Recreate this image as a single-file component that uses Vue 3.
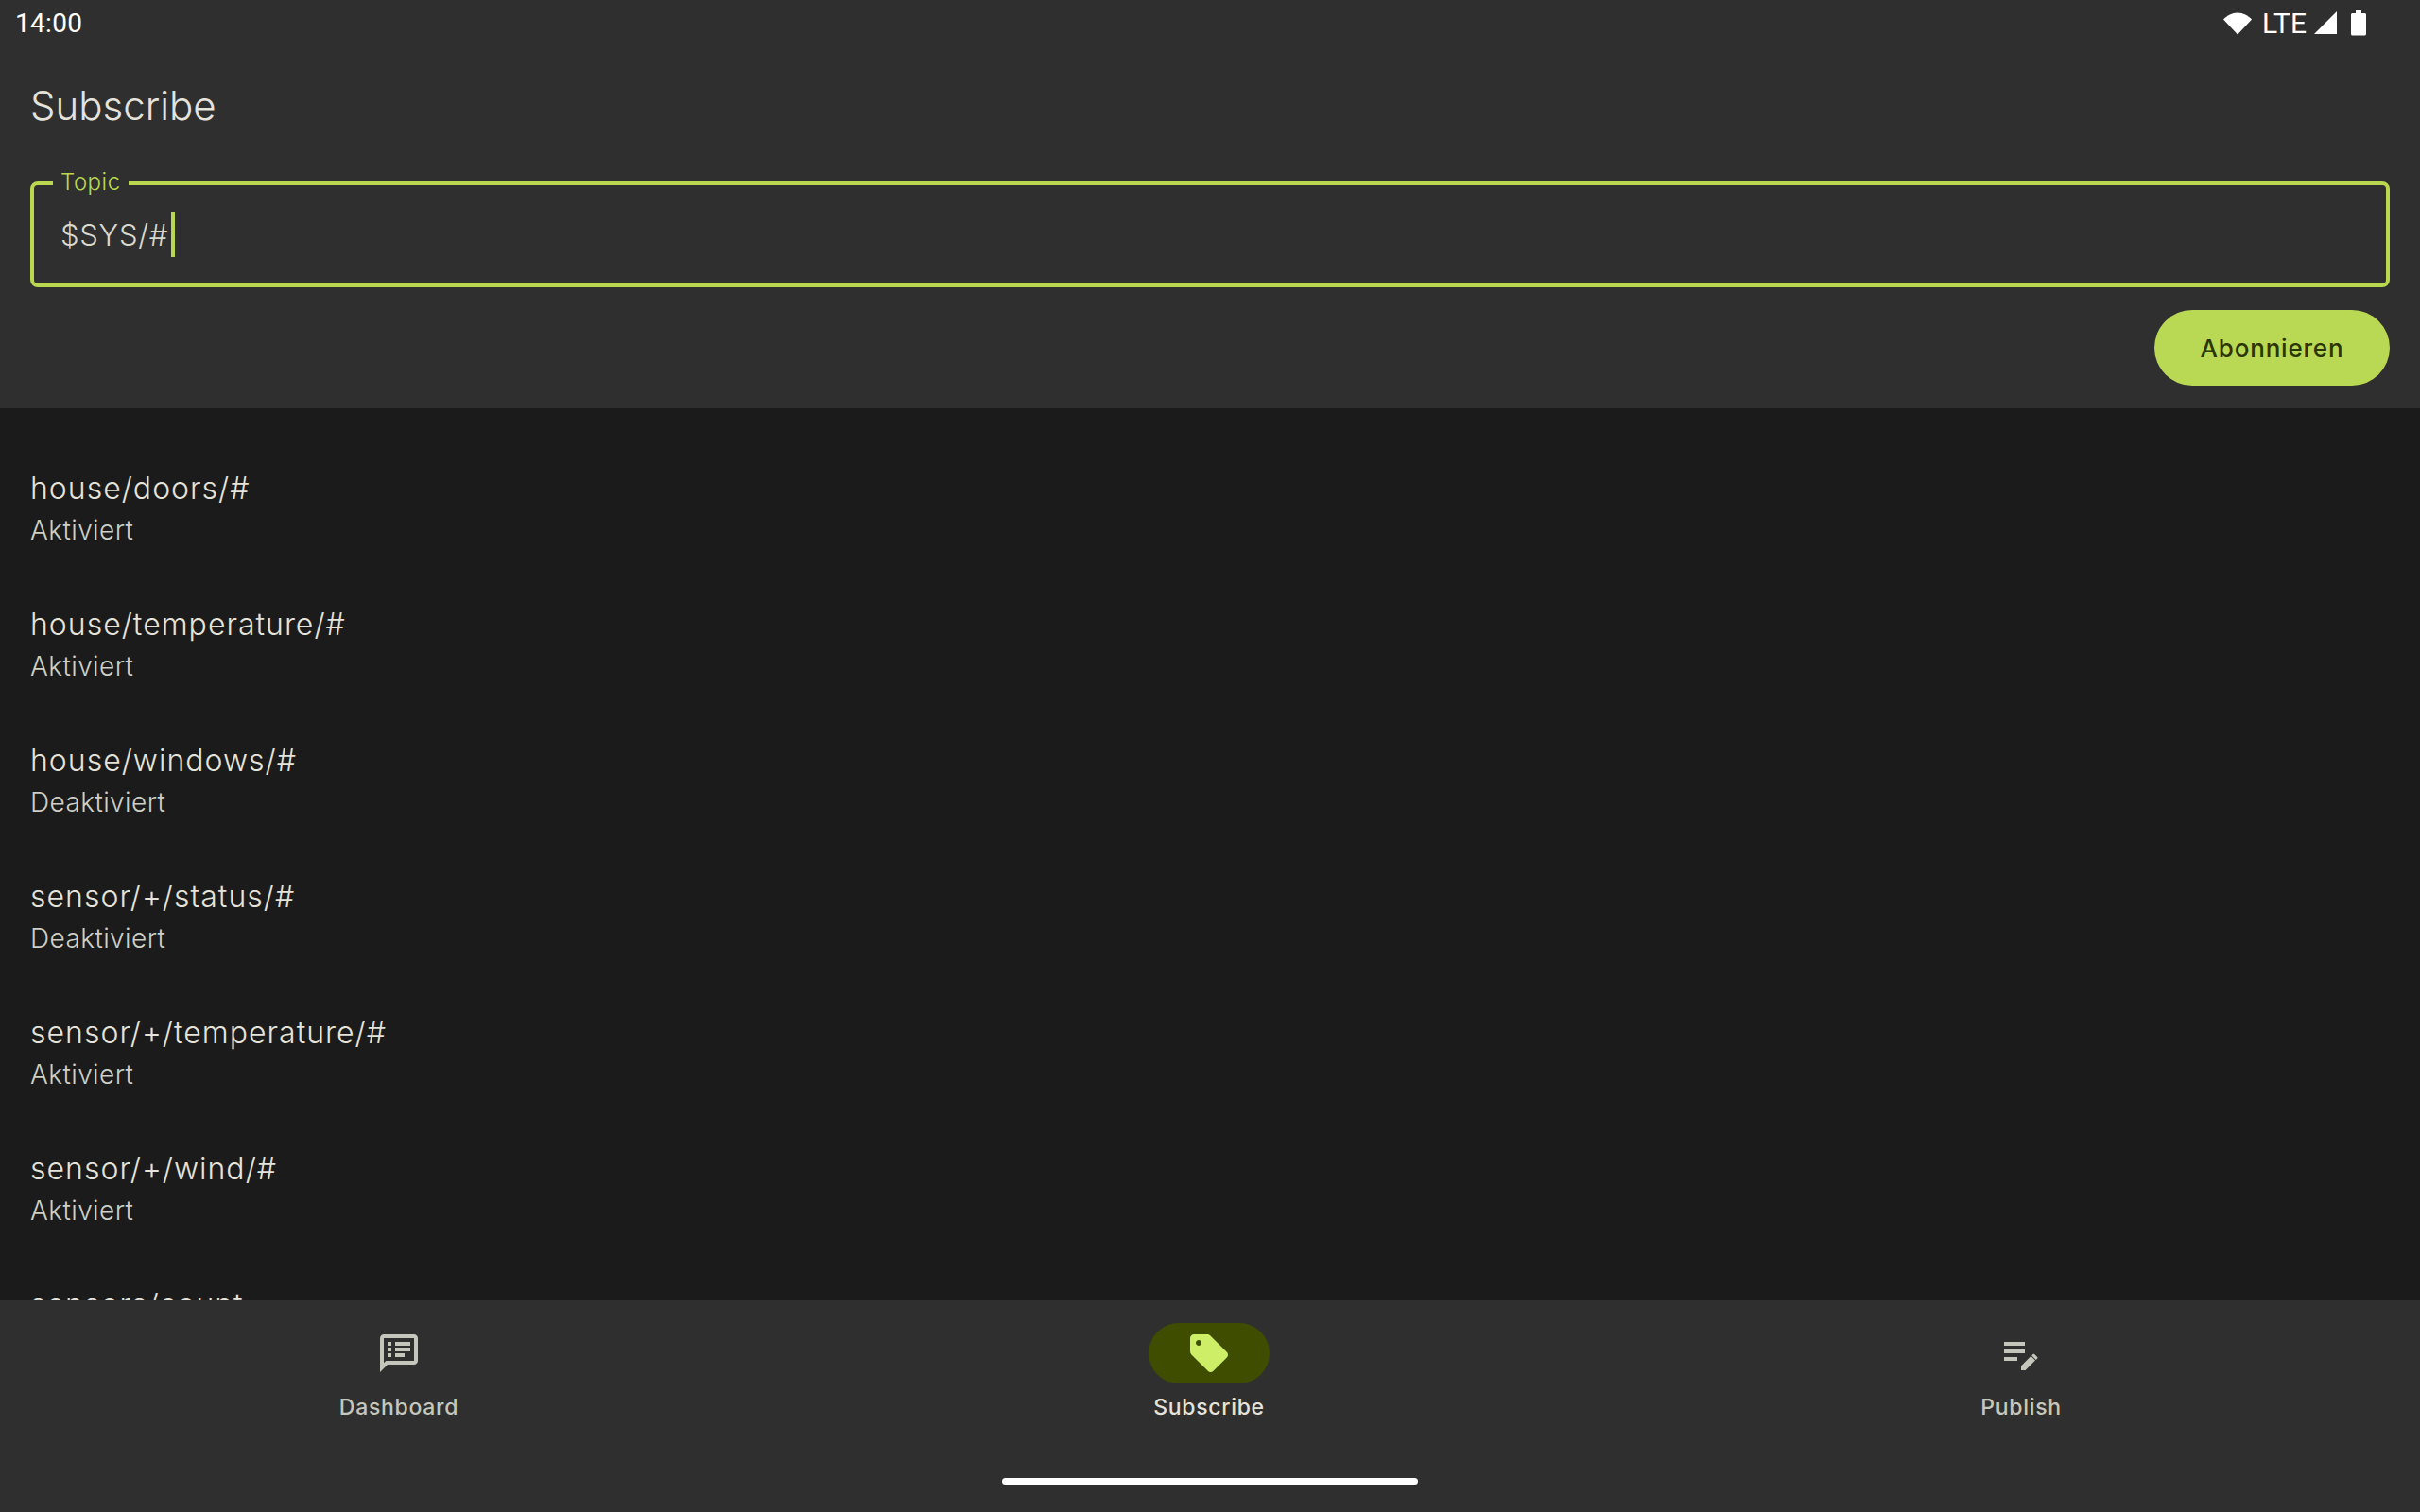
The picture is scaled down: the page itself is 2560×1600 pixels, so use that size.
<template>
  <div class="screen">
    <header class="top">
      <div class="status">
        <span class="time">14:00</span>
        <div class="status-icons">
          <svg class="wifi" width="32" height="28" viewBox="0 0 32 28"><path d="M16 26.500 1 10.500C5 6.500 10 3.500 16 3.500s11 3 15 7z" /></svg>
          <span class="lte">LTE</span>
          <svg class="signal" width="26" height="26" viewBox="0 0 26 26"><path d="M25 1v24H1z" /></svg>
          <svg class="battery" width="18" height="28" viewBox="0 0 18 28"><path d="M6 1h6v3h3.500c.8 0 1.500.7 1.500 1.500V26c0 .8-.7 1.500-1.500 1.500h-13C1.700 27.500 1 26.800 1 26V5.500C1 4.700 1.700 4 2.500 4H6z" /></svg>
        </div>
      </div>

      <h1 class="title">Subscribe</h1>

      <div class="field">
        <label class="field-label">Topic</label>
        <span class="field-value">$SYS/#</span><span class="caret"></span>
      </div>

      <div class="actions">
        <button class="subscribe-btn">Abonnieren</button>
      </div>
    </header>

    <main class="list">
      <div v-for="item in topics" :key="item.topic" class="row">
        <div class="row-title">{{ item.topic }}</div>
        <div class="row-sub">{{ item.state }}</div>
      </div>
    </main>

    <nav class="nav">
      <div class="tabs">
        <div v-for="tab in tabs" :key="tab.label" class="tab" :class="{ active: tab.active }">
          <div class="pill">
            <svg width="48" height="48" viewBox="0 0 24 24"><path :d="tab.icon" /></svg>
          </div>
          <span class="tab-label">{{ tab.label }}</span>
        </div>
      </div>
      <div class="home-bar"></div>
    </nav>
  </div>
</template>

<script setup>
const topics = [
  { topic: 'house/doors/#', state: 'Aktiviert' },
  { topic: 'house/temperature/#', state: 'Aktiviert' },
  { topic: 'house/windows/#', state: 'Deaktiviert' },
  { topic: 'sensor/+/status/#', state: 'Deaktiviert' },
  { topic: 'sensor/+/temperature/#', state: 'Aktiviert' },
  { topic: 'sensor/+/wind/#', state: 'Aktiviert' },
  { topic: 'sensors/count', state: 'Aktiviert' }
]

const tabs = [
  {
    label: 'Dashboard',
    icon: 'M20 2H4c-1.100 0-1.990.9-1.990 2L2 22l4-4h14c1.100 0 2-.9 2-2V4c0-1.100-.9-2-2-2zm0 14H5.170L4 17.170V4h16v12zM6 12h2v2H6zm0-3h2v2H6zm0-3h2v2H6zm4 6h5v2h-5zm0-3h8v2h-8zm0-3h8v2h-8z'
  },
  {
    label: 'Subscribe',
    active: true,
    icon: 'M21.410 11.410l-8.830-8.830C12.210 2.210 11.700 2 11.170 2H4c-1.100 0-2 .9-2 2v7.170c0 .53.21 1.040.59 1.410l8.830 8.830c.78.78 2.050.78 2.830 0l7.170-7.170c.78-.78.78-2.040-.01-2.830zM6.500 8C5.670 8 5 7.330 5 6.500S5.670 5 6.500 5 8 5.670 8 6.500 7.330 8 6.500 8z'
  },
  {
    label: 'Publish',
    icon: 'M14 10H3v2h11v-2zm0-4H3v2h11V6zM3 16h7v-2H3v2zm9 2.700V21h2.300l5.200-5.200-2.300-2.300zM20.500 14.900c.3-.3.3-.7 0-1l-1.300-1.300c-.3-.3-.7-.3-1 0l-.6.6 2.300 2.300z'
  }
]
</script>

<style scoped>
.screen {
  width: 2560px;
  height: 1600px;
  display: flex;
  flex-direction: column;
  overflow: hidden;
  background: #1b1b1b;
  font-family: "Inter", "Open Sans", sans-serif;
  color: #e5e3da;
}

.top {
  background: #2f2f2f;
  height: 432px;
  padding: 0 32px;
  box-sizing: border-box;
  flex-shrink: 0;
}

.status {
  height: 48px;
  margin: 0 -32px;
  padding: 0 56px 0 16px;
  display: flex;
  align-items: center;
  font-family: "Roboto", sans-serif;
  color: #fff;
}

.time {
  font-size: 28px;
  letter-spacing: 0.3px;
}

.status-icons {
  margin-left: auto;
  display: flex;
  align-items: center;
}

.status-icons svg {
  fill: #fff;
}

.lte {
  font-size: 30px;
  margin: 0 7px 0 10px;
}

.battery {
  margin-left: 13px;
}

.title {
  margin: 0;
  padding-top: 40px;
  font-size: 42px;
  line-height: 48px;
  font-weight: 300;
  letter-spacing: 0;
}

.field {
  position: relative;
  margin-top: 56px;
  height: 112px;
  box-sizing: border-box;
  border: 4px solid #b9d850;
  border-radius: 8px;
  padding: 0 28px;
  display: flex;
  align-items: center;
}

.field-label {
  position: absolute;
  left: 20px;
  top: -19px;
  padding: 0 8px;
  background: #2f2f2f;
  color: #b9d850;
  font-size: 24px;
  font-weight: 300;
  line-height: 32px;
  letter-spacing: 0.5px;
}

.field-value {
  font-size: 31px;
  font-weight: 300;
  letter-spacing: 0.7px;
  color: #d9d8cd;
}

.caret {
  width: 4px;
  height: 48px;
  margin-left: 3px;
  background: #b9d850;
}

.actions {
  margin-top: 24px;
  display: flex;
  justify-content: flex-end;
}

.subscribe-btn {
  width: 249px;
  height: 80px;
  border: none;
  border-radius: 40px;
  background: #b9d955;
  color: #2b3500;
  font-family: inherit;
  font-size: 26px;
  font-weight: 500;
  letter-spacing: 0.8px;
  padding: 0;
}

.list {
  flex: 1;
  min-height: 0;
  overflow: hidden;
  padding: 33px 32px 0;
}

.row {
  height: 144px;
  padding-top: 28px;
  box-sizing: border-box;
}

.row-title {
  font-size: 32px;
  font-weight: 300;
  line-height: 48px;
  letter-spacing: 1px;
}

.row-sub {
  font-size: 28px;
  font-weight: 300;
  line-height: 40px;
  letter-spacing: 0.4px;
  color: #cfcfc5;
}

.nav {
  height: 224px;
  flex-shrink: 0;
  background: #2f2f2f;
  display: flex;
  flex-direction: column;
  align-items: center;
}

.tabs {
  display: flex;
  justify-content: center;
  width: 100%;
  padding-top: 24px;
}

.tab {
  width: 858px;
  flex-shrink: 0;
  display: flex;
  flex-direction: column;
  align-items: center;
  color: #c6c7bc;
}

.tab.active {
  position: relative;
  left: -1px;
}

.pill {
  width: 128px;
  height: 64px;
  border-radius: 32px;
  display: flex;
  align-items: center;
  justify-content: center;
}

.pill svg {
  fill: currentColor;
}

.tab-label {
  margin-top: 5px;
  font-size: 23px;
  line-height: 40px;
  font-weight: 500;
  letter-spacing: 0.7px;
}

.tab.active .pill {
  background: #3f4d00;
  color: #cdee66;
}

.tab.active .tab-label {
  color: #e5e3da;
}

.home-bar {
  margin-top: 55px;
  width: 440px;
  height: 7px;
  border-radius: 4px;
  background: #fff;
}
</style>
